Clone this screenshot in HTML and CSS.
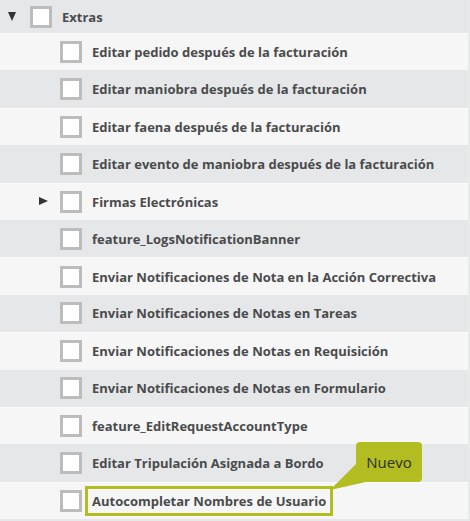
FILE: index.html
```html
<!DOCTYPE html>
<html lang="es">
  <head>
    <meta charset="UTF-8" />
    <meta name="viewport" content="width=device-width, initial-scale=1.0" />
    <title>Permisos</title>
    <link rel="stylesheet" href="styles.css">
  </head>
  <body>
    <ul class="tree">
      <li class="node node-top">
        <span class="caret"><span class="arrow-down"></span></span>
        <span class="check"></span>
        <span class="label">Extras</span>
      </li>
      <li class="node child odd">
        <span class="caret"></span><span class="check"></span>
        <span class="label">Editar pedido después de la facturación</span>
      </li>
      <li class="node child">
        <span class="caret"></span><span class="check"></span>
        <span class="label">Editar maniobra después de la facturación</span>
      </li>
      <li class="node child odd">
        <span class="caret"></span><span class="check"></span>
        <span class="label">Editar faena después de la facturación</span>
      </li>
      <li class="node child">
        <span class="caret"></span><span class="check"></span>
        <span class="label">Editar evento de maniobra después de la facturación</span>
      </li>
      <li class="node child odd">
        <span class="caret"><span class="arrow-right"></span></span><span class="check"></span>
        <span class="label">Firmas Electrónicas</span>
      </li>
      <li class="node child">
        <span class="caret"></span><span class="check"></span>
        <span class="label">feature_LogsNotificationBanner</span>
      </li>
      <li class="node child odd">
        <span class="caret"></span><span class="check"></span>
        <span class="label">Enviar Notificaciones de Nota en la Acción Correctiva</span>
      </li>
      <li class="node child">
        <span class="caret"></span><span class="check"></span>
        <span class="label">Enviar Notificaciones de Notas en Tareas</span>
      </li>
      <li class="node child odd">
        <span class="caret"></span><span class="check"></span>
        <span class="label">Enviar Notificaciones de Notas en Requisición</span>
      </li>
      <li class="node child">
        <span class="caret"></span><span class="check"></span>
        <span class="label">Enviar Notificaciones de Notas en Formulario</span>
      </li>
      <li class="node child odd">
        <span class="caret"></span><span class="check"></span>
        <span class="label">feature_EditRequestAccountType</span>
      </li>
      <li class="node child">
        <span class="caret"></span><span class="check"></span>
        <span class="label">Editar Tripulación Asignada a Bordo</span>
      </li>
      <li class="node child odd is-new">
        <span class="caret"></span><span class="check"></span>
        <span class="label">Autocompletar Nombres de Usuario</span>
        <svg class="badge-tail" width="42" height="32" viewBox="0 0 42 32">
          <polygon points="28,3 38,21 2,29" fill="#b1bd20" />
        </svg>
        <span class="badge">Nuevo</span>
      </li>
    </ul>
  </body>
</html>
```

FILE: styles.css
```css
body {
  margin: 0;
  background: #e6e7e9;
  font-family: "Open Sans", "DejaVu Sans", sans-serif;
}
.tree {
  list-style: none;
  margin: 0;
  padding: 0;
  border-right: 1px solid #ececed;
  margin-right: 1px;
}
.node {
  display: flex;
  align-items: center;
  height: 37.4px;
  box-sizing: border-box;
  color: #4a4b4c;
  font-size: 13px;
  font-weight: 700;
}
.node-top {
  height: 33px;
}
.child {
  padding-left: 30px;
}
.odd {
  background: #f6f6f6;
  border-top: 1px solid #fbfbfb;
}
.caret {
  width: 30px;
  height: 22px;
  position: relative;
  flex-shrink: 0;
}
.arrow-down {
  position: absolute;
  left: 8px;
  top: 6px;
  border-left: 4.5px solid transparent;
  border-right: 4.5px solid transparent;
  border-top: 9px solid #333;
}
.arrow-right {
  position: absolute;
  left: 9px;
  top: 6px;
  border-top: 4.5px solid transparent;
  border-bottom: 4.5px solid transparent;
  border-left: 9px solid #333;
}
.check {
  width: 22px;
  height: 22px;
  box-sizing: border-box;
  border: 3px solid #bcbcbc;
  background: white;
  margin-right: 3px;
  flex-shrink: 0;
}
.label {
  border: 3px solid transparent;
  padding: 3px 4px;
  line-height: 18px;
  white-space: nowrap;
}
.is-new {
  position: relative;
}
.is-new .label {
  border-color: #b1bd20;
}
.badge {
  position: absolute;
  left: 356px;
  top: -41px;
  width: 66px;
  height: 40px;
  line-height: 40px;
  text-align: center;
  background: #b1bd20;
  border-radius: 4px;
  color: #2d2d2d;
  font-size: 15px;
  font-weight: 400;
}
.badge-tail {
  position: absolute;
  left: 328px;
  top: -22px;
}
```
